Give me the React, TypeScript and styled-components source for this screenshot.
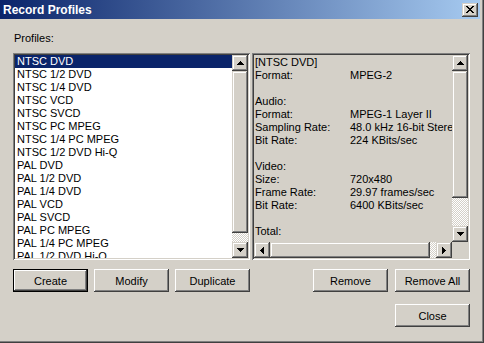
import React from "react";
import styled, { createGlobalStyle } from "styled-components";

const profiles = [
  "NTSC DVD",
  "NTSC 1/2 DVD",
  "NTSC 1/4 DVD",
  "NTSC VCD",
  "NTSC SVCD",
  "NTSC PC MPEG",
  "NTSC 1/4 PC MPEG",
  "NTSC 1/2 DVD Hi-Q",
  "PAL DVD",
  "PAL 1/2 DVD",
  "PAL 1/4 DVD",
  "PAL VCD",
  "PAL SVCD",
  "PAL PC MPEG",
  "PAL 1/4 PC MPEG",
  "PAL 1/2 DVD Hi-Q",
  "PAL 1/2 DVD LP",
];

const details: [string, string][] = [
  ["[NTSC DVD]", ""],
  ["Format:", "MPEG-2"],
  ["", ""],
  ["Audio:", ""],
  ["Format:", "MPEG-1 Layer II"],
  ["Sampling Rate:", "48.0 kHz 16-bit Stereo"],
  ["Bit Rate:", "224 KBits/sec"],
  ["", ""],
  ["Video:", ""],
  ["Size:", "720x480"],
  ["Frame Rate:", "29.97 frames/sec"],
  ["Bit Rate:", "6400 KBits/sec"],
  ["", ""],
  ["Total:", ""],
];

const GlobalStyle = createGlobalStyle`
  html, body {
    margin: 0;
    padding: 0;
    background: #d4d0c8;
  }
  body {
    font-family: "Liberation Sans", Arial, sans-serif;
    font-size: 11px;
    color: #000;
  }
`;

const raised = `
  background: #d4d0c8;
  box-shadow: inset -1px -1px #404040, inset 1px 1px #d4d0c8,
    inset -2px -2px #808080, inset 2px 2px #ffffff;
`;

const Window = styled.div`
  width: 484px;
  height: 343px;
  box-sizing: border-box;
  padding: 0 4px 4px 0;
  background: #d4d0c8;
  box-shadow: inset -1px -1px #404040, inset -2px -2px #808080;
  display: flex;
  flex-direction: column;
  overflow: hidden;
`;

const TitleBar = styled.div`
  height: 19px;
  flex: none;
  display: flex;
  align-items: center;
  justify-content: space-between;
  padding: 0 2px 0 3px;
  background: linear-gradient(to right, #0a246a, #a6caf0);
  color: #fff;
  font-weight: bold;
  font-size: 12px;
`;

const CloseBox = styled.div`
  width: 16px;
  height: 14px;
  display: flex;
  align-items: center;
  justify-content: center;
  ${raised}
`;

const Body = styled.div`
  flex: 1;
  display: flex;
  flex-direction: column;
  padding: 13px 10px 0 13px;
`;

const Label = styled.div`
  height: 13px;
  line-height: 13px;
  margin-bottom: 8px;
  padding-left: 1px;
`;

const Panels = styled.div`
  height: 207px;
  display: flex;
  gap: 2px;
`;

const Sunken = styled.div`
  box-sizing: border-box;
  padding: 2px;
  box-shadow: inset 1px 1px #808080, inset -1px -1px #ffffff,
    inset 2px 2px #404040, inset -2px -2px #d4d0c8;
`;

const ListBox = styled(Sunken)`
  width: 237px;
  background: #fff;
  display: flex;
`;

const Items = styled.div`
  flex: 1;
  overflow: hidden;
`;

const Item = styled.div<{ $selected?: boolean }>`
  height: 13px;
  line-height: 13px;
  padding-left: 2px;
  white-space: nowrap;
  background: ${(p) => (p.$selected ? "#0a246a" : "transparent")};
  color: ${(p) => (p.$selected ? "#fff" : "#000")};
`;

const InfoBox = styled(Sunken)`
  width: 218px;
  background: #d4d0c8;
  display: grid;
  grid-template-columns: 1fr 16px;
  grid-template-rows: 1fr 16px;
`;

const InfoText = styled.div`
  overflow: hidden;
  padding: 1px 0 0 1px;
  white-space: nowrap;
`;

const InfoRow = styled.div`
  display: grid;
  grid-template-columns: 95px auto;
  height: 13px;
  line-height: 13px;
`;

const ScrollBar = styled.div<{ $horizontal?: boolean }>`
  display: flex;
  flex-direction: ${(p) => (p.$horizontal ? "row" : "column")};
  ${(p) => (p.$horizontal ? "height: 16px;" : "width: 16px;")}
  flex: none;
`;

const ArrowButton = styled.div`
  width: 16px;
  height: 16px;
  flex: none;
  display: flex;
  align-items: center;
  justify-content: center;
  ${raised}
`;

const Track = styled.div<{ $horizontal?: boolean }>`
  flex: 1;
  display: flex;
  flex-direction: ${(p) => (p.$horizontal ? "row" : "column")};
  background-color: #d4d0c8;
  background-image: conic-gradient(#fff 25%, #d4d0c8 0 50%, #fff 0 75%, #d4d0c8 0);
  background-size: 2px 2px;
`;

const Thumb = styled.div<{ $size: number; $horizontal?: boolean }>`
  flex: none;
  ${(p) => (p.$horizontal ? `width: ${p.$size}px;` : `height: ${p.$size}px;`)}
  ${raised}
`;

const Corner = styled.div`
  background: #d4d0c8;
`;

const ButtonRow = styled.div`
  display: flex;
  justify-content: space-between;
  margin-top: 9px;
`;

const ButtonGroup = styled.div<{ $gap: number }>`
  display: flex;
  gap: ${(p) => p.$gap}px;
`;

const CloseRow = styled.div`
  display: flex;
  justify-content: flex-end;
  margin-top: 12px;
`;

const Button = styled.button<{ $default?: boolean }>`
  width: 75px;
  height: 23px;
  padding: 0;
  border: none;
  outline: none;
  background: #d4d0c8;
  font: 11px "Liberation Sans", Arial, sans-serif;
  color: #000;
  box-shadow: ${(p) =>
    p.$default
      ? "inset 0 0 0 1px #000, inset -2px -2px #404040, inset 2px 2px #fff, inset -3px -3px #808080"
      : "inset -1px -1px #404040, inset 1px 1px #fff, inset -2px -2px #808080, inset 2px 2px #d4d0c8"};
`;

type Dir = "up" | "down" | "left" | "right";

const Arrow = ({ dir }: { dir: Dir }) => {
  const rows = [1, 3, 5, 7];
  if (dir === "up" || dir === "down") {
    return (
      <svg width="7" height="4" viewBox="0 0 7 4" shapeRendering="crispEdges">
        {rows.map((w, i) => (
          <rect key={i} x={(7 - w) / 2} y={dir === "up" ? i : 3 - i} width={w} height={1} fill="#000" />
        ))}
      </svg>
    );
  }
  return (
    <svg width="4" height="7" viewBox="0 0 4 7" shapeRendering="crispEdges">
      {rows.map((h, i) => (
        <rect key={i} y={(7 - h) / 2} x={dir === "left" ? i : 3 - i} height={h} width={1} fill="#000" />
      ))}
    </svg>
  );
};

const CloseGlyph = () => {
  const px = [
    [0, 0], [1, 0], [6, 0], [7, 0],
    [1, 1], [2, 1], [5, 1], [6, 1],
    [2, 2], [3, 2], [4, 2], [5, 2],
    [3, 3], [4, 3],
    [2, 4], [3, 4], [4, 4], [5, 4],
    [1, 5], [2, 5], [5, 5], [6, 5],
    [0, 6], [1, 6], [6, 6], [7, 6],
  ];
  return (
    <svg width="8" height="7" viewBox="0 0 8 7" shapeRendering="crispEdges">
      {px.map(([x, y], i) => (
        <rect key={i} x={x} y={y} width={1} height={1} fill="#000" />
      ))}
    </svg>
  );
};

const VScroll = ({ thumb }: { thumb: number }) => (
  <ScrollBar>
    <ArrowButton>
      <Arrow dir="up" />
    </ArrowButton>
    <Track>
      <Thumb $size={thumb} />
    </Track>
    <ArrowButton>
      <Arrow dir="down" />
    </ArrowButton>
  </ScrollBar>
);

const HScroll = ({ thumb }: { thumb: number }) => (
  <ScrollBar $horizontal>
    <ArrowButton>
      <Arrow dir="left" />
    </ArrowButton>
    <Track $horizontal>
      <Thumb $size={thumb} $horizontal />
    </Track>
    <ArrowButton>
      <Arrow dir="right" />
    </ArrowButton>
  </ScrollBar>
);

const App = () => {
  return (
    <>
      <GlobalStyle />
      <Window>
        <TitleBar>
          <span>Record Profiles</span>
          <CloseBox>
            <CloseGlyph />
          </CloseBox>
        </TitleBar>
        <Body>
          <Label>Profiles:</Label>
          <Panels>
            <ListBox>
              <Items>
                {profiles.map((name, i) => (
                  <Item key={name} $selected={i === 0}>
                    {name}
                  </Item>
                ))}
              </Items>
              <VScroll thumb={162} />
            </ListBox>
            <InfoBox>
              <InfoText>
                {details.map(([k, v], i) => (
                  <InfoRow key={i}>
                    <span>{k}</span>
                    <span>{v}</span>
                  </InfoRow>
                ))}
              </InfoText>
              <VScroll thumb={127} />
              <HScroll thumb={160} />
              <Corner />
            </InfoBox>
          </Panels>
          <ButtonRow>
            <ButtonGroup $gap={6}>
              <Button $default>Create</Button>
              <Button>Modify</Button>
              <Button>Duplicate</Button>
            </ButtonGroup>
            <ButtonGroup $gap={7}>
              <Button>Remove</Button>
              <Button>Remove All</Button>
            </ButtonGroup>
          </ButtonRow>
          <CloseRow>
            <Button>Close</Button>
          </CloseRow>
        </Body>
      </Window>
    </>
  );
};

export default App;
